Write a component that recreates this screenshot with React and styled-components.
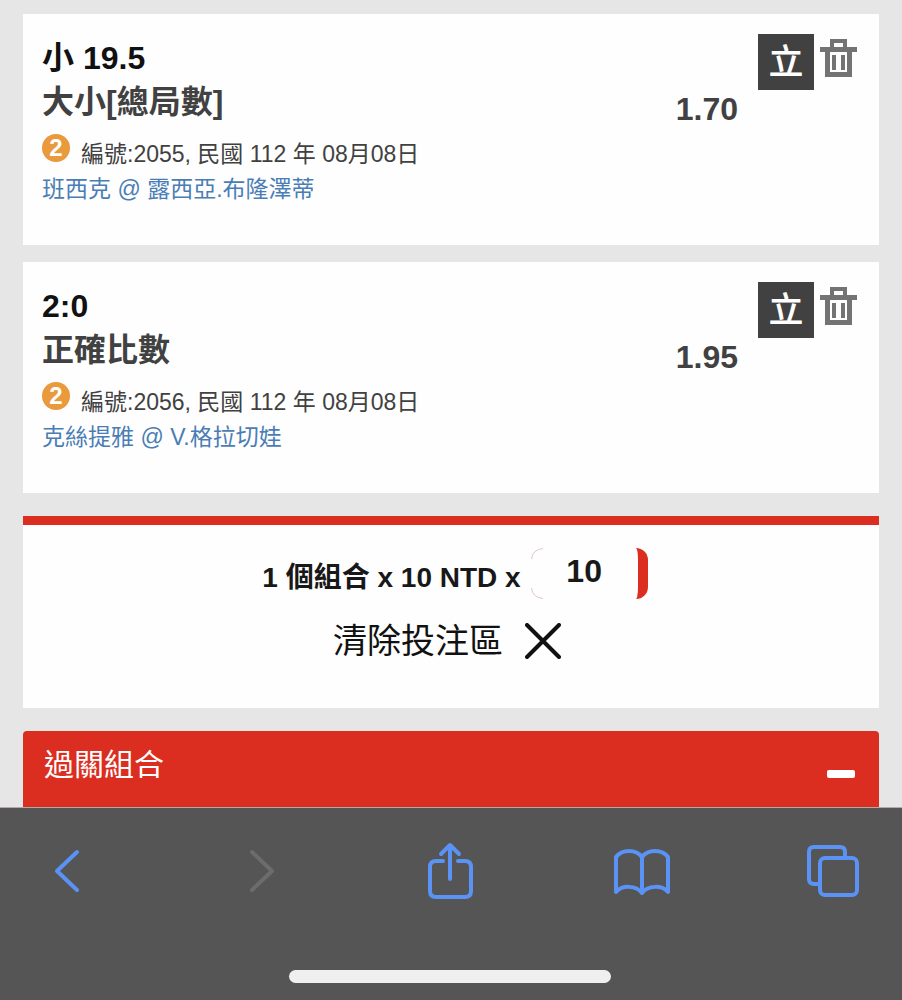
import React from 'react';
import styled, { createGlobalStyle } from 'styled-components';

const GlobalStyle = createGlobalStyle`
  *, *::before, *::after { box-sizing: border-box; }
  body {
    margin: 0;
    background: #e6e6e6;
    font-family: "Liberation Sans", "Noto Sans CJK TC", sans-serif;
    color: #414141;
  }
  button, input { font-family: inherit; }
`;

const Page = styled.div`
  min-height: 100vh;
  display: flex;
  flex-direction: column;
`;

const Slip = styled.main`
  flex: 1;
  display: flex;
  flex-direction: column;
  padding: 14px 23px 0;
`;

const BetCard = styled.article`
  display: flex;
  align-items: flex-start;
  min-height: 231px;
  margin-bottom: 17px;
  padding: 20px 22px 20px 19px;
  background: #fefefe;
`;

const BetInfo = styled.div`
  flex: 1;
  min-width: 0;
  padding-top: 2px;
`;

const Pick = styled.h2`
  margin: 0;
  font-size: 32px;
  line-height: 44px;
  font-weight: 700;
  color: #111;
`;

const Market = styled.p`
  margin: 0;
  font-size: 32px;
  line-height: 44px;
  font-weight: 700;
`;

const Meta = styled.div`
  display: flex;
  align-items: flex-start;
  gap: 11px;
  margin-top: 10px;
  font-size: 23px;
  line-height: 40px;
`;

const LegBadge = styled.span`
  width: 28px;
  height: 28px;
  border-radius: 50%;
  background: #e99a3c;
  color: #fff;
  font-size: 24px;
  line-height: 28px;
  font-weight: 700;
  text-align: center;
`;

const MatchLink = styled.a`
  display: block;
  font-size: 23px;
  line-height: 30px;
  color: #4a7db5;
  text-decoration: none;
`;

const Odds = styled.strong`
  margin: 57px 20px 0 0;
  font-size: 32px;
  line-height: 36px;
  font-weight: 700;
`;

const BankerButton = styled.button`
  width: 56px;
  height: 56px;
  margin-right: 6px;
  padding: 0;
  border: 0;
  background: #414141;
  color: #fff;
  font-size: 34px;
  line-height: 52px;
  -webkit-text-stroke: 1px #fff;
`;

const IconButton = styled.button`
  display: flex;
  justify-content: center;
  padding: 0;
  border: 0;
  background: none;
  color: ${(p) => p.$color || '#5a92f5'};
`;

const TrashButton = styled(IconButton)`
  margin-top: 5px;
`;

const NavButton = styled(IconButton)`
  width: 56px;
`;

const StakePanel = styled.section`
  display: flex;
  flex-direction: column;
  align-items: center;
  min-height: 192px;
  margin-top: 6px;
  padding: 23px 20px;
  border-top: 9px solid #dc2e20;
  background: #fefefe;
`;

const StakeRow = styled.label`
  display: flex;
  align-items: center;
  gap: 10px;
  padding-left: 8px;
  font-size: 28px;
  line-height: 36px;
  font-weight: 700;
  color: #181818;
`;

const StakeText = styled.span`
  padding-top: 8px;
`;

const InputFrame = styled.span`
  position: relative;
  display: flex;

  svg {
    position: absolute;
    left: 0;
    top: 0;
    pointer-events: none;
  }
`;

const StakeInput = styled.input`
  width: 117px;
  height: 51px;
  padding: 0 0 4px;
  border: 0;
  border-right: 10px solid #dc2e20;
  border-radius: 12px;
  background: #fefefe;
  color: #181818;
  font-size: 32px;
  font-weight: 700;
  text-align: center;
`;

const ClearButton = styled.button`
  display: flex;
  align-items: center;
  gap: 22px;
  margin-top: 16px;
  padding: 2px 8px 0 0;
  border: 0;
  background: none;
  color: #111;
  font-size: 34px;
  line-height: 48px;
`;

const ComboHeader = styled.button`
  display: flex;
  align-items: flex-start;
  justify-content: space-between;
  min-height: 76px;
  margin-top: 23px;
  padding: 14px 24px 0 21px;
  border: 0;
  border-radius: 4px 4px 0 0;
  background: #dc2e20;
  color: #fff;
  font-size: 30px;
  line-height: 40px;
  text-align: left;
`;

const Minus = styled.span`
  width: 28px;
  height: 8px;
  margin-top: 25px;
  border-radius: 2px;
  background: #fff;
`;

const BrowserBar = styled.footer`
  display: flex;
  flex-direction: column;
  align-items: center;
  justify-content: space-between;
  height: 193px;
  padding: 34px 41px 17px 39px;
  border-top: 1px solid #b5a9a8;
  background: #555;
`;

const NavRow = styled.nav`
  display: flex;
  justify-content: space-between;
  align-items: center;
  width: 100%;
`;

const HomeIndicator = styled.div`
  width: 322px;
  height: 13px;
  border-radius: 7px;
  background: #efefef;
`;

const bets = [
  { pick: '小 19.5', market: '大小[總局數]', code: '2055', match: '班西克 @ 露西亞.布隆澤蒂', odds: '1.70' },
  { pick: '2:0', market: '正確比數', code: '2056', match: '克絲提雅 @ V.格拉切娃', odds: '1.95' },
];

const Trash = () => (
  <svg width="37" height="39" viewBox="0 0 37 39" aria-hidden="true">
    <path fill="#737373" fillRule="evenodd" d="M10 0H27V8H37V13H32V38H5V13H0V8H10ZM14 4V8H23V4ZM10 13V33H27V13ZM12 16H16V31H12ZM21 16H25V31H21Z" />
  </svg>
);

const Line = ({ w, h, children, sw = 4 }) => (
  <svg width={w} height={h} viewBox={`0 0 ${w} ${h}`} fill="none" stroke="currentColor" strokeWidth={sw} strokeLinecap="round" strokeLinejoin="round" aria-hidden="true">
    {children}
  </svg>
);

export default function App() {
  return (
    <Page>
      <GlobalStyle />
      <Slip>
        {bets.map((b) => (
          <BetCard key={b.code}>
            <BetInfo>
              <Pick>{b.pick}</Pick>
              <Market>{b.market}</Market>
              <Meta>
                <LegBadge>2</LegBadge>
                <span>編號:{b.code}, 民國 112 年 08月08日</span>
              </Meta>
              <MatchLink href="#match">{b.match}</MatchLink>
            </BetInfo>
            <Odds>{b.odds}</Odds>
            <BankerButton type="button">立</BankerButton>
            <TrashButton type="button" aria-label="刪除"><Trash /></TrashButton>
          </BetCard>
        ))}
        <StakePanel>
          <StakeRow>
            <StakeText>1 個組合 x 10 NTD x</StakeText>
            <InputFrame>
              <StakeInput type="text" inputMode="numeric" defaultValue="10" />
              <svg width="14" height="51" viewBox="0 0 14 51" fill="none" stroke="#ddc8c8" aria-hidden="true">
                <path d="M0.5 11Q1.5 1.5 12 0.5M0.5 40Q1.5 49.500 12 50.500" />
              </svg>
            </InputFrame>
          </StakeRow>
          <ClearButton type="button">
            清除投注區
            <Line w={36} h={36}><path d="M2 2 34 34M34 2 2 34" /></Line>
          </ClearButton>
        </StakePanel>
        <ComboHeader type="button" aria-expanded="true">
          過關組合
          <Minus />
        </ComboHeader>
      </Slip>
      <BrowserBar>
        <NavRow>
          <NavButton type="button" aria-label="上一頁">
            <Line w={28} h={44}><path d="M24 3 4 22 24 41" /></Line>
          </NavButton>
          <NavButton type="button" aria-label="下一頁" $color="#6c6c6c">
            <Line w={36} h={44}><path d="M11 3 31 22 11 41" /></Line>
          </NavButton>
          <NavButton type="button" aria-label="分享">
            <Line w={46} h={58}>
              <path d="M16 19H9Q3 19 3 25V49Q3 55 9 55H38Q44 55 44 49V25Q44 19 38 19H31M23 37V3M14 12 23 3 32 12" />
            </Line>
          </NavButton>
          <NavButton type="button" aria-label="書籤">
            <Line w={56} h={48}>
              <path d="M28 10C22 2 8 2 2 10V45C8 38 22 38 28 46C34 38 48 38 54 45V10C48 2 34 2 28 10ZV46" />
            </Line>
          </NavButton>
          <NavButton type="button" aria-label="分頁">
            <Line w={54} h={54}>
              <rect x="14" y="14" width="37" height="37" rx="5" />
              <path d="M13 40H8Q3 40 3 35V8Q3 3 8 3H34Q39 3 39 8V13" />
            </Line>
          </NavButton>
        </NavRow>
        <HomeIndicator />
      </BrowserBar>
    </Page>
  );
}
